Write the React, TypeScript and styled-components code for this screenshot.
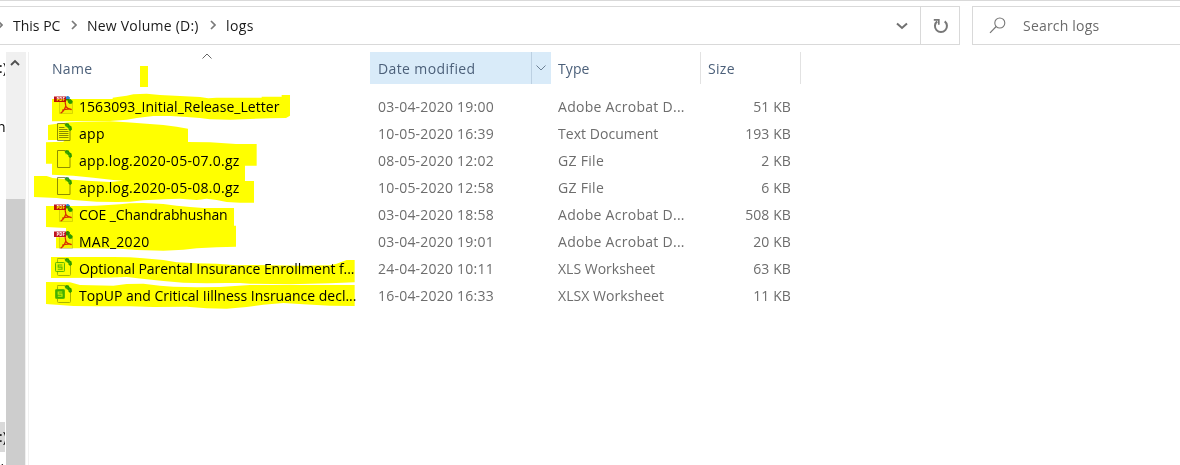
import React from "react";
import styled, { createGlobalStyle } from "styled-components";

const GlobalStyle = createGlobalStyle`
  * { box-sizing: border-box; }
  body { margin: 0; background: #fff; overflow: hidden; }
`;

const Window = styled.div`
  position: relative;
  width: 1180px;
  height: 465px;
  display: flex;
  flex-direction: column;
  overflow: hidden;
  isolation: isolate;
  background: #fff;
  border-top: 1px solid #d9d9d9;
  font-family: "Open Sans", "Noto Sans", sans-serif;
  font-size: 14px;
  line-height: 20px;
  color: #1a1a1a;
  white-space: pre;
`;

const Label = styled.span<{ $track?: number }>`
  letter-spacing: ${(p) => p.$track ?? 0}px;
`;

const Toolbar = styled.div`
  display: flex;
  gap: 12px;
  height: 39px;
  margin-top: 5px;
  flex: none;
`;

const AddressBar = styled.div`
  display: flex;
  align-items: stretch;
  width: 960px;
  border: 1px solid #d9d9d9;
  border-left: 0;
`;

const Crumbs = styled.div`
  display: flex;
  align-items: center;
  flex: 1;
  margin-left: -3px;
`;

const Crumb = styled(Label)<{ $width: number }>`
  width: ${(p) => p.$width}px;
`;

const CrumbArrow = styled.svg<{ $gap: number }>`
  width: 6px;
  height: 10px;
  margin-right: ${(p) => p.$gap}px;
  margin-top: -2px;
  flex: none;
`;

const BarButton = styled.div<{ $divided?: boolean }>`
  width: ${(p) => (p.$divided ? 39 : 37)}px;
  display: flex;
  align-items: center;
  justify-content: center;
  border-left: ${(p) => (p.$divided ? "1px solid #d9d9d9" : "0")};
`;

const SearchBox = styled.div`
  flex: 1;
  display: flex;
  align-items: center;
  gap: 17px;
  padding-left: 16px;
  border: 1px solid #d9d9d9;
  border-right: 0;
  color: #6b6b6b;
`;

const Body = styled.div`
  display: flex;
  flex: 1;
  padding-top: 7px;
  min-height: 0;
`;

const NavPane = styled.div`
  width: 6px;
  padding-right: 1px;
  flex: none;
  overflow: hidden;
  display: flex;
  flex-direction: column;
  color: #000;
`;

const NavItem = styled.div<{ $space: number; $shift?: number; $selected?: boolean }>`
  height: 30px;
  line-height: 30px;
  flex: none;
  width: 5px;
  overflow: hidden;
  margin-top: ${(p) => p.$space}px;
  text-indent: ${(p) => p.$shift ?? -1}px;
  background: ${(p) => (p.$selected ? "#d9d9d9" : "transparent")};
`;

const ScrollTrack = styled.div`
  width: 20px;
  flex: none;
  display: flex;
  flex-direction: column;
  background: #f0f0f0;
`;

const ScrollArrow = styled.svg`
  width: 10px;
  height: 7px;
  margin: 7px 0 133px 4px;
  flex: none;
`;

const ScrollThumb = styled.div`
  flex: 1;
  width: 19px;
  background: #cdcdcd;
`;

const PaneEdge = styled.div`
  width: 1px;
  margin-left: 2px;
  background: #f0f0f0;
`;

const FilePane = styled.div`
  flex: 1;
  padding-left: 23px;
`;

const columns = "318px 180px 150px 100px";

const HeaderRow = styled.div`
  display: grid;
  grid-template-columns: ${columns};
  height: 32px;
  margin-bottom: 9px;
  color: #4c607a;
`;

const HeaderCell = styled.div<{ $active?: boolean; $edge?: boolean }>`
  display: flex;
  align-items: center;
  justify-content: space-between;
  padding: 1px 0 0 8px;
  margin-right: -1px;
  background: ${(p) => (p.$active ? "#d9ebf9" : "transparent")};
  border-right: ${(p) => (p.$edge ? "1px solid #e2e2e2" : "0")};
`;

const NameHeader = styled(HeaderCell)`
  padding-left: 0;
  justify-content: flex-start;
`;

const SortArrow = styled.svg`
  width: 10px;
  height: 6px;
  margin: -26px 0 0 110px;
`;

const FilterButton = styled.div`
  width: 20px;
  height: 32px;
  margin-top: -1px;
  padding: 0 2px 1px 0;
  display: flex;
  align-items: center;
  justify-content: center;
  border-left: 1px solid #bcd0e2;
`;

const FileRow = styled.div`
  display: grid;
  grid-template-columns: ${columns};
  align-items: center;
  height: 27px;
  color: #6d6d6d;
`;

const NameCell = styled.div`
  display: flex;
  align-items: center;
  gap: 5px;
  height: 27px;
  padding-left: 2px;
  color: #000;
`;

const Cell = styled.div<{ $track?: number }>`
  padding-left: 8px;
  letter-spacing: ${(p) => p.$track ?? 0}px;
`;

const SizeCell = styled.div`
  text-align: right;
  padding-right: 9px;
  letter-spacing: 0.1px;
`;

const Highlighter = styled.svg`
  position: absolute;
  left: 0;
  top: -1px;
  width: 400px;
  height: 465px;
  mix-blend-mode: multiply;
  pointer-events: none;
`;

const Icon = styled.svg`
  width: 20px;
  height: 20px;
  flex: none;
  margin-top: -1px;
`;

type Kind = "pdf" | "text" | "blank" | "xls" | "xlsx";

const SyncMark = () => (
  <g>
    <path d="M10.500 1.800l2-1.700 2.200.5.8 1.700 2 1.200.5 3-1.700 1.600-1.700-1.400-.3-1.800-2-.8z" fill="#2c9a2c" />
    <path d="M11.500 3.800l2-1M14.200 5.800l1.600-1" stroke="#74c832" strokeWidth=".8" />
  </g>
);

const Page = () => (
  <path d="M3.500.5h8l4.500 4.500v12.500h-12.500z" fill="#fdfdfb" stroke="#8e8e5c" strokeWidth="1" />
);

function FileIcon({ kind }: { kind: Kind }) {
  if (kind === "pdf") {
    return (
      <Icon viewBox="0 0 20 20">
        <path d="M5.500 1.500h9l4 4v12h-13z" fill="#f4f4f4" stroke="#cfcfcf" strokeWidth=".8" />
        <path d="M11.500 1l2.300-1.300 2.200 1.800-.8 2.700-3 .2z" fill="#2f86d2" />
        <path d="M13.500 4.200l2.700-1.200 2.500 2-.5 2.500-2.500.5-1.700-1.400z" fill="#2c9a2c" />
        <rect x="0" y="0.500" width="12" height="5.500" fill="#bf1420" />
        <text x="2.500" y="5" fontSize="4.300" fontWeight="700" fill="#fff">PDF</text>
        <path
          d="M11.200 6.500c1 2.400.6 4.400-.5 6.200-.9 1.700-2.200 3.400-3.700 4.100M11.700 10.300c1 1.900 3 2.800 5.500 3.200M8.700 14.200c2-.9 4.300-1.300 7.500-1"
          fill="none"
          stroke="#d8301c"
          strokeWidth="1.300"
          strokeLinecap="round"
        />
      </Icon>
    );
  }
  if (kind === "xls" || kind === "xlsx") {
    const solid = kind === "xlsx";
    return (
      <Icon viewBox="0 0 20 20">
        <path
          d="M3.500.5h8l5 5v11q0 1-1 1h-11q-1 0-1-1v-15q0-1 0-1z"
          fill="#fdfdfb"
          stroke="#a9b578"
          strokeWidth="1"
        />
        <SyncMark />
        <rect x="1.500" y="4.500" width="9" height="9" rx=".8" fill={solid ? "#43b010" : "#e9f7df"} stroke="#5cba2c" />
        <path
          d="M8.300 7H4.200v2.100h3.800v2.200H3.800"
          fill="none"
          stroke={solid ? "#c9f0a8" : "#5cba2c"}
          strokeWidth="1.100"
        />
      </Icon>
    );
  }
  return (
    <Icon viewBox="0 0 20 20">
      <Page />
      {kind === "text" && (
        <path d="M5 4.500h5.500M5 6.500h8.500M5 8.500h9.500M5 10.500h9.500M5 12.500h9.500M5 14.500h9.500" stroke="#8a8a5c" strokeWidth="1" />
      )}
      <SyncMark />
    </Icon>
  );
}

type FileEntry = {
  kind: Kind;
  name: string;
  track: number;
  date: string;
  type: string;
  typeTrack: number;
  size: string;
};

const files: FileEntry[] = [
  { kind: "pdf", name: "1563093_Initial_Release_Letter", track: 0.04, date: "03-04-2020 19:00", type: "Adobe Acrobat D...", typeTrack: 0.28, size: "51 KB" },
  { kind: "text", name: "app", track: 0.3, date: "10-05-2020 16:39", type: "Text Document", typeTrack: 0.04, size: "193 KB" },
  { kind: "blank", name: "app.log.2020-05-07.0.gz", track: 0.27, date: "08-05-2020 12:02", type: "GZ File", typeTrack: 0.3, size: "2 KB" },
  { kind: "blank", name: "app.log.2020-05-08.0.gz", track: 0.27, date: "10-05-2020 12:58", type: "GZ File", typeTrack: 0.3, size: "6 KB" },
  { kind: "pdf", name: "COE _Chandrabhushan", track: -0.1, date: "03-04-2020 18:58", type: "Adobe Acrobat D...", typeTrack: 0.28, size: "508 KB" },
  { kind: "pdf", name: "MAR_2020", track: 0.28, date: "03-04-2020 19:01", type: "Adobe Acrobat D...", typeTrack: 0.28, size: "20 KB" },
  { kind: "xls", name: "Optional Parental Insurance Enrollment f...", track: -0.05, date: "24-04-2020 10:11", type: "XLS Worksheet", typeTrack: 0, size: "63 KB" },
  { kind: "xlsx", name: "TopUP and Critical Iillness Insruance decl...", track: 0, date: "16-04-2020 16:33", type: "XLSX Worksheet", typeTrack: 0.06, size: "11 KB" },
];

const Chevron = ({ gap }: { gap: number }) => (
  <CrumbArrow $gap={gap} viewBox="0 0 6 10">
    <path d="M1 1l4 4-4 4" fill="none" stroke="#7a7a7a" strokeWidth="1.700" />
  </CrumbArrow>
);

export default function App() {
  return (
    <Window>
      <GlobalStyle />
      <Toolbar>
        <AddressBar>
          <Crumbs>
            <Chevron gap={10} />
            <Crumb $width={58}>This PC</Crumb>
            <Chevron gap={10} />
            <Crumb $width={123} $track={0.22}>New Volume (D:)</Crumb>
            <Chevron gap={10} />
            <Crumb $width={40} $track={0.4}>logs</Crumb>
          </Crumbs>
          <BarButton>
            <svg width="12" height="8" viewBox="0 0 12 8">
              <path d="M1 1.500l5 4.500 5-4.500" fill="none" stroke="#707070" strokeWidth="2" />
            </svg>
          </BarButton>
          <BarButton $divided>
            <svg width="18" height="16" viewBox="-1 0 18 16">
              <path d="M11.700 3.400A6 6 0 1 1 4.200 3.400" transform="translate(1 0)" fill="none" stroke="#777" strokeWidth="2" />
              <path d="M1.800 1.900h5v4.800" fill="none" stroke="#777" strokeWidth="1.700" />
            </svg>
          </BarButton>
        </AddressBar>
        <SearchBox>
          <svg width="17" height="17" viewBox="0 0 17 17">
            <circle cx="10.800" cy="6" r="5" fill="none" stroke="#777" strokeWidth="1.100" />
            <path d="M7.200 9.500L1 15.800" stroke="#777" strokeWidth="1.200" />
          </svg>
          <Label $track={0.2}>Search logs</Label>
        </SearchBox>
      </Toolbar>
      <Body>
        <NavPane>
          <NavItem $space={1}>:)</NavItem>
          <NavItem $space={29} $shift={-3}>n</NavItem>
          <NavItem $space={280} $selected>:)</NavItem>
          <NavItem $space={2} $shift={1}>)</NavItem>
        </NavPane>
        <ScrollTrack>
          <ScrollArrow viewBox="0 0 10 7">
            <path d="M1 6l4-4 4 4" fill="none" stroke="#505050" strokeWidth="1.900" />
          </ScrollArrow>
          <ScrollThumb />
        </ScrollTrack>
        <PaneEdge />
        <FilePane>
          <HeaderRow>
            <NameHeader>
              <Label $track={0.3}>Name</Label>
              <SortArrow viewBox="0 0 10 6">
                <path d="M.5 5.500L5 1l4.500 4.500" fill="none" stroke="#666" />
              </SortArrow>
            </NameHeader>
            <HeaderCell $active>
              <Label $track={0.38}>Date modified</Label>
              <FilterButton>
                <svg width="10" height="6" viewBox="0 0 10 6">
                  <path d="M.5.5L5 5 9.500.5" fill="none" stroke="#6b7f94" />
                </svg>
              </FilterButton>
            </HeaderCell>
            <HeaderCell $edge>
              <Label $track={0.1}>Type</Label>
            </HeaderCell>
            <HeaderCell $edge>
              <Label $track={0.3}>Size</Label>
            </HeaderCell>
          </HeaderRow>
          {files.map((file) => (
            <FileRow key={file.name}>
              <NameCell>
                <FileIcon kind={file.kind} />
                <Label $track={file.track}>{file.name}</Label>
              </NameCell>
              <Cell $track={0.22}>{file.date}</Cell>
              <Cell $track={file.typeTrack}>{file.type}</Cell>
              <SizeCell>{file.size}</SizeCell>
            </FileRow>
          ))}
        </FilePane>
      </Body>
      <Highlighter viewBox="0 0 400 465">
        <g fill="#ff0">
          <rect x="140" y="66" width="8" height="21" />
          <g transform="translate(30 90) scale(.33333)">
            <path d="M66 27H248V23L268 20 290 17 310 13 350 11 390 15 450 18 510 21 535 25 560 23H695V20H755V15H780V77L768 84 720 85 660 87 600 89 540 88 510 84 470 81 420 78 370 78 320 84 290 89 240 93 66 94Z" />
            <path d="M54 105L80 101 120 97 160 95 240 94 290 97 350 101 400 105 440 110 474 116V156L540 157 618 162H680V227H645V273H672V338H630L590 336 560 330 530 326 500 330 450 326 400 328 340 331 300 335 260 336 200 335 130 330 80 324 12 321V258H50L68 264 110 268 170 272 240 276 280 272 250 270 190 263 130 257 66 254V221H48V157L100 155 104 150 54 150Z" />
          </g>
          <g transform="translate(30 195) scale(.33333)">
            <path d="M48 33H165L200 32 270 28 300 25 340 24 400 27 440 32 480 36 520 39H612V92H618V155L560 157 500 160 460 164 400 167 320 165 270 161 170 160H78V127H108V99L48 96Z" />
            <path d="M63 186H200L250 186 300 187 340 190 400 195 440 202 500 205 560 206 620 211 680 210 810 212 900 211 920 206 932 202 950 195H974V262L900 265 780 268 660 266 630 264 590 264 530 265 460 263 400 258 350 253 290 246 230 248 63 249Z" />
            <path d="M48 261L120 262 150 270 250 272 290 267 340 266 390 272 430 275 500 277 570 276 660 270H974V333L900 332 820 328 760 324 700 329 650 336 590 341 530 340 470 335 370 336 300 334 200 334 130 333 48 327Z" />
          </g>
        </g>
      </Highlighter>
    </Window>
  );
}
